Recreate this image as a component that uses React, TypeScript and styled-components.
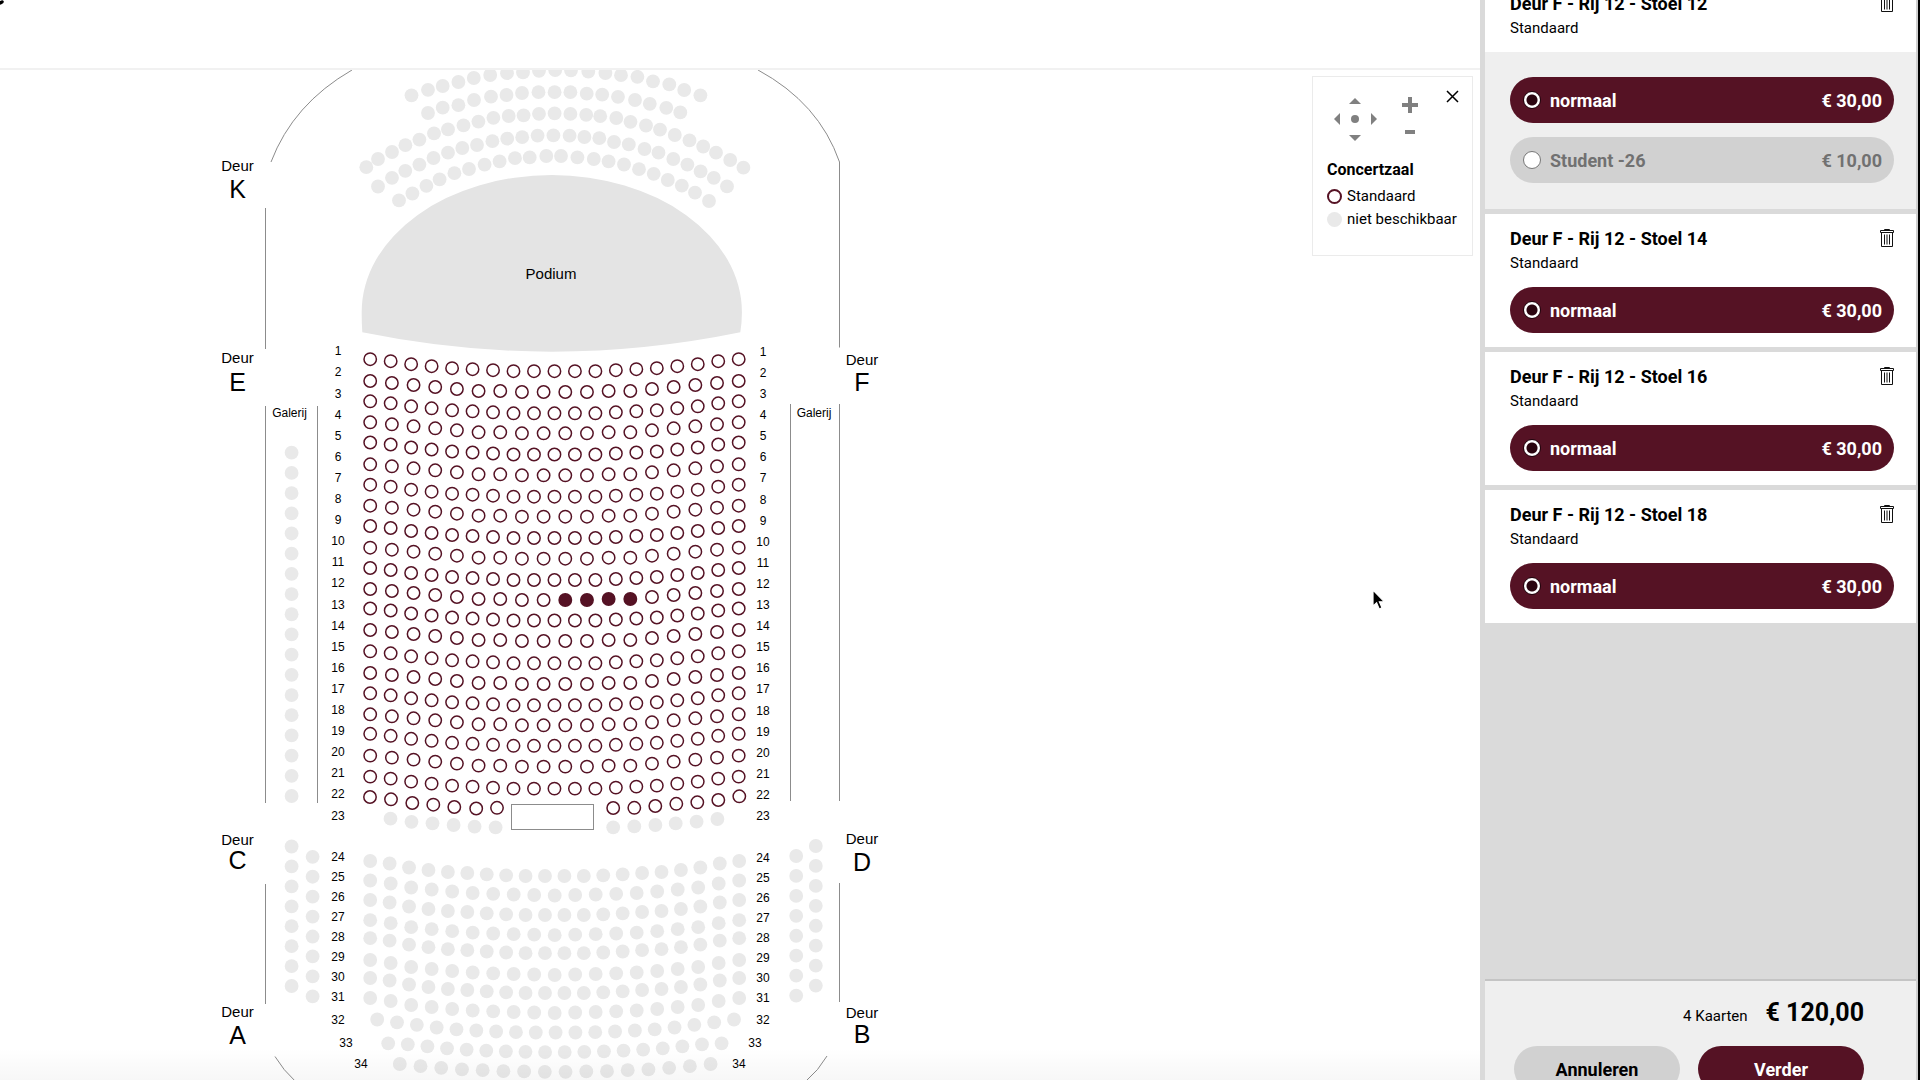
import React, { useState } from "react";
import styled, { createGlobalStyle } from "styled-components";

const WINE = "#551224";
const sans = `Roboto, "Liberation Sans", sans-serif`;

const GlobalStyle = createGlobalStyle`
  *, *::before, *::after { box-sizing: border-box; }
  body { margin: 0; background: #fff; color: #000; font-family: ${sans}; overflow: hidden; }
  button { font: inherit; color: inherit; border: 0; padding: 0; background: none; cursor: pointer; }
`;

/* ---------- page frame ---------- */

const Page = styled.div`
  display: flex;
  height: 100vh;
  overflow: hidden;
  border-right: 2px solid #000;
`;

const Main = styled.main`
  position: relative;
  flex: 1;
  min-width: 0;
  display: flex;
  flex-direction: column;
`;

const TopBar = styled.header`
  flex: none;
  height: 70px;
  border-bottom: 2px solid #f1f1f1;

  svg { display: block; }
`;

const MapArea = styled.section`
  position: relative;
  flex: 1;
  min-height: 0;
  overflow: hidden;

  &::after {
    content: "";
    position: absolute;
    inset: auto 0 0 0;
    height: 32px;
    background: linear-gradient(rgba(0, 0, 0, 0), rgba(0, 0, 0, 0.03));
    pointer-events: none;
  }
`;

const MapSvg = styled.svg`
  display: block;
  width: 100%;
  height: 100%;
  font-family: "Liberation Sans", Arial, sans-serif;
  text-anchor: middle;
`;

const Pointer = styled.svg`
  position: absolute;
  left: 1371px;
  top: 588px;
  z-index: 3;
  pointer-events: none;
`;

/* ---------- hall plan ---------- */

type Point = [number, number];

const GREY = "#e9e9e9";

/* Vertical sag of a row, from its outer seat to the middle. */
const sag19 = [0, 2, 5, 7, 9, 10, 11, 12, 12, 12];
const sag18 = [0, 2, 4, 6, 8, 10, 10, 11, 11];
const sagRear19 = [0, 3, 7, 9, 11, 12.5, 13.3, 14, 14.5, 15];
const sagRear20 = [0, 2.5, 6.5, 9, 11, 12, 13.3, 14.3, 15, 15];

const curvedRow = (x0: number, x1: number, y: number, count: number, sag: number[]): Point[] =>
  Array.from({ length: count }, (_, i) => [
    x0 + ((x1 - x0) * i) / (count - 1),
    y + sag[Math.min(i, count - 1 - i)],
  ]);

const frontTops = [
  359.2, 381, 401.3, 422.3, 442.5, 464.3, 484.7, 505.7, 526, 547.7, 568, 589,
  608.5, 630, 651.3, 673, 693.3, 714.3, 733.8, 755.6, 776.6,
];

const frontRows: Point[][] = frontTops.map((y, i) =>
  i % 2 === 0 ? curvedRow(370.2, 738.7, y, 19, sag19) : curvedRow(370.2, 738.7, y, 18, sag18)
);

const row22: Point[] = [
  [370, 797], [391, 799.3], [412.3, 803], [433.3, 804.7], [454.3, 807], [476.2, 808.5], [497, 807.8],
  [613.2, 808], [634.3, 807.8], [655.3, 806], [676.3, 803.8], [697.3, 802.3], [718.3, 800], [739.3, 796.3],
];

const row23: Point[] = [
  [390.5, 818.7], [411.5, 821.8], [432.5, 823.3], [453.6, 825], [474.6, 826.6], [495.6, 827.3],
  [613.2, 827.3], [634.3, 826.4], [655.4, 825], [675.7, 823.4], [696.6, 821.7], [717.4, 819],
];

const rearTops = [861, 880.5, 900, 920.2, 938.2, 960, 978, 998];

const rearRows: Point[][] = [
  ...rearTops.map((y, i) =>
    i % 2 === 0 ? curvedRow(370.2, 739.2, y, 20, sagRear20) : curvedRow(370.2, 739.2, y, 19, sagRear19)
  ),
  curvedRow(377.2, 734, 1019.5, 19, [0, 2.8, 5.3, 8, 9.8, 11, 12, 12.7, 13, 13]),
  curvedRow(388.2, 721.6, 1043.3, 18, [0, 1, 3, 5, 6.3, 7.3, 8, 8.5, 8.8]),
  curvedRow(399.8, 710.6, 1064, 16, [0, 2.2, 3.8, 5.4, 6.2, 7.2, 7.4, 7.8]),
];

/* Choir rows behind the stage. */
const choirLeft: Point[][] = [
  [[411.5, 95.3], [428, 89.8], [442.7, 86], [458.4, 82], [473.8, 78], [490.2, 75], [507, 73.2], [523, 72.4], [539, 70.8], [555.2, 70.2]],
  [[428, 113], [442.7, 107.7], [458.4, 105.2], [474, 100], [491, 96.7], [506.5, 95], [522, 93], [538.5, 92.2], [554.6, 92.2]],
  [[366.3, 167.2], [378, 159], [392, 152], [405.4, 145.2], [419.4, 139.6], [434, 133.4], [448, 129.4], [463.5, 125.4], [478.4, 121.6], [493.4, 117.8], [508.7, 116], [523.6, 115.3], [539, 113.8], [554.6, 113.4]],
  [[378, 186.5], [392, 177.8], [405.3, 170.8], [419.4, 164.6], [433.5, 158], [448, 152.7], [462.3, 148], [477, 145], [492.4, 141.2], [507.2, 138.7], [522.2, 137.2], [537.6, 135.6], [553.4, 135.4]],
  [[399, 200.4], [412.4, 193.5], [426.4, 185.8], [439.6, 179.3], [454.4, 173.2], [469, 169], [484.6, 164.6], [499.6, 161.4], [515, 158.2], [529.7, 157.4], [546.3, 156]],
];

const choirRight: Point[][] = [
  [[571, 70.3], [588.3, 71.6], [605.4, 73], [621, 75.2], [637.4, 76.8], [653, 81.3], [669.3, 84.4], [684.2, 90], [700.4, 95.3]],
  [[570.4, 92.2], [586.7, 93.7], [602.2, 94.6], [618, 96.8], [635, 100], [649.8, 103.8], [666.3, 107.8], [680.3, 112.4]],
  [[570.4, 113.9], [586.2, 114.8], [600.2, 116.2], [616.3, 118], [630.5, 121.8], [646, 125.5], [660, 129.6], [674.8, 135], [689.5, 140.4], [703.2, 146.5], [716, 152.7], [730.2, 160], [743.4, 167.7]],
  [[569.6, 135.7], [584.4, 137], [599.3, 138.2], [614, 142], [628.8, 144.4], [644.5, 149], [658.5, 152.7], [673.3, 159], [687.4, 164.6], [700.6, 171.4], [713.8, 177.8], [727, 186.4]],
  [[561, 156], [577.4, 157.4], [593.8, 159], [608.6, 161.4], [624, 164.5], [639, 169.2], [653.7, 173.8], [667.8, 180], [681.8, 185.6], [695, 192.6], [709, 201]],
];

const column = (x: number, y0: number, y1: number, count: number): Point[] =>
  Array.from({ length: count }, (_, i) => [x, y0 + ((y1 - y0) * i) / (count - 1)]);

const balconySeats: Point[] = [
  ...column(291.6, 452.7, 796, 18),
  ...column(291.6, 846.5, 986, 8),
  ...column(312.6, 856.8, 996.3, 8),
  ...column(796.2, 856, 995.6, 8),
  ...column(815.8, 846, 985.6, 8),
];

const greySeats: Point[] = [...choirLeft.flat(), ...choirRight.flat(), ...row23, ...rearRows.flat(), ...balconySeats];

const doors = [
  { name: "K", x: 237.5, label: 171, letter: 198 },
  { name: "E", x: 237.5, label: 363, letter: 391 },
  { name: "C", x: 237.5, label: 845, letter: 869 },
  { name: "A", x: 237.5, label: 1017, letter: 1044 },
  { name: "F", x: 862, label: 365, letter: 391 },
  { name: "D", x: 862, label: 844, letter: 871 },
  { name: "B", x: 862, label: 1018, letter: 1043 },
];

const rowLabels = Array.from({ length: 34 }, (_, i) => {
  const n = i + 1;
  if (n <= 23) return { n, left: 338, right: 763, y: 355.3 + i * 21.1 };
  if (n <= 31) return { n, left: 338, right: 763, y: 861.3 + (n - 24) * 20 };
  if (n === 32) return { n, left: 338, right: 763, y: 1023.5 };
  if (n === 33) return { n, left: 346, right: 755, y: 1046.5 };
  return { n, left: 361, right: 739, y: 1067.5 };
});

function HallPlan() {
  return (
    <MapSvg viewBox="0 70 1480 1010" preserveAspectRatio="xMinYMin meet" role="img" aria-label="Concertzaal">
      <g fill="none" stroke="#8c8c8c" strokeWidth="1">
        <path d="M352 70Q293 104 271 162M265.5 208V349M839.5 162V347.5M758 70Q819 103 839.5 162" />
        <path d="M265.5 406V803M317.5 406V803M790.5 404V801M839.5 404V801" />
        <path d="M265.5 884V1004M839.5 883V1002M275 1056.5Q283 1070 296 1082M827 1056Q819 1070 805 1082" />
        <rect x="511.5" y="804.5" width="82" height="25" />
      </g>
      <path
        d="M362.3 332.3Q361.6 322 361.7 312A190.1 137 0 0 1 741.9 312Q742 322 740.3 332.3Q552 371 362.3 332.3Z"
        fill="#e4e4e4"
      />
      <g fill={GREY}>
        {greySeats.map(([x, y], i) => (
          <circle key={i} cx={x} cy={y} r="6.9" />
        ))}
      </g>
      <g stroke={WINE} strokeWidth="1.5">
        {frontRows.map((row, r) =>
          row.map(([x, y], i) => (
            <circle key={`${r}-${i}`} cx={x} cy={y} r="6.2" fill={r === 11 && i >= 9 && i <= 12 ? WINE : "#fff"} />
          ))
        )}
        {row22.map(([x, y], i) => (
          <circle key={i} cx={x} cy={y} r="6.2" fill="#fff" />
        ))}
      </g>
      <g fontSize="12">
        {rowLabels.map(({ n, left, right, y }) => (
          <g key={n}>
            <text x={left} y={y}>{n}</text>
            <text x={right} y={y + 0.5}>{n}</text>
          </g>
        ))}
        <text x="289.5" y="417">Galerij</text>
        <text x="814" y="417">Galerij</text>
      </g>
      <text x="551" y="279" fontSize="15">Podium</text>
      {doors.map((d) => (
        <g key={d.name}>
          <text x={d.x} y={d.label} fontSize="15">Deur</text>
          <text x={d.x} y={d.letter} fontSize="25">{d.name}</text>
        </g>
      ))}
    </MapSvg>
  );
}

/* ---------- legend ---------- */

const Legend = styled.aside`
  position: absolute;
  top: 6px;
  right: 7px;
  z-index: 2;
  width: 161px;
  height: 180px;
  padding: 14px 0 0 14px;
  background: #fff;
  border: 1px solid #ebebeb;
  font-size: 15px;
  line-height: 23px;
`;

const Controls = styled.div`
  display: flex;
  gap: 18px;
  margin-bottom: 11px;
`;

const PanPad = styled.div`
  display: grid;
  grid-template-columns: 19px 18px 19px;
  grid-template-rows: 19px 18px 19px;
  grid-template-areas: ". up ." "left mid right" ". down .";
`;

const PadButton = styled.button<{ $area: string }>`
  grid-area: ${(p) => p.$area};
  display: grid;
  place-items: center;
  color: #808080;
`;

const ZoomPad = styled.div`
  display: grid;
  grid-template-rows: 27px 27px;
  color: #808080;

  button { display: grid; place-items: center; width: 18px; }
`;

const CloseButton = styled.button`
  position: absolute;
  top: 10px;
  right: 10px;
  display: grid;
  place-items: center;
  width: 19px;
  height: 19px;
`;

const LegendTitle = styled.h2`
  margin: 0 0 4px;
  font-size: 16px;
  line-height: 23px;
  font-weight: 700;
`;

const LegendList = styled.ul`
  margin: 0;
  padding: 0;
  list-style: none;
`;

const LegendItem = styled.li<{ $open?: boolean }>`
  display: flex;
  align-items: center;
  gap: 5px;
  white-space: nowrap;

  &::before {
    content: "";
    width: 15px;
    height: 15px;
    border-radius: 50%;
    background: ${(p) => (p.$open ? "#fff" : GREY)};
    border: ${(p) => (p.$open ? `2px solid ${WINE}` : "0")};
  }
`;

const arrows: Record<string, string> = {
  up: "M0 9 6 3 12 9Z",
  down: "M0 3 12 3 6 9Z",
  left: "M9 0V12L3 6Z",
  right: "M3 0V12L9 6Z",
};

const arrowNames: Record<string, string> = { up: "Omhoog", down: "Omlaag", left: "Links", right: "Rechts" };

function MapLegend() {
  return (
    <Legend>
      <CloseButton aria-label="Sluiten">
        <svg width="13" height="13" viewBox="0 0 13 13" stroke="#000" strokeWidth="1.5">
          <path d="M1 1 12 12M12 1 1 12" />
        </svg>
      </CloseButton>
      <Controls>
        <PanPad>
          {Object.keys(arrows).map((dir) => (
            <PadButton key={dir} $area={dir} aria-label={arrowNames[dir]}>
              <svg width="12" height="12" viewBox="0 0 12 12" fill="currentColor">
                <path d={arrows[dir]} />
              </svg>
            </PadButton>
          ))}
          <PadButton $area="mid" aria-label="Centreren">
            <svg width="8" height="8" viewBox="0 0 8 8" fill="currentColor">
              <circle cx="4" cy="4" r="4" />
            </svg>
          </PadButton>
        </PanPad>
        <ZoomPad>
          <button aria-label="Inzoomen">
            <svg width="16" height="16" viewBox="0 0 16 16" stroke="currentColor" strokeWidth="4">
              <path d="M8 0V16M0 8H16" />
            </svg>
          </button>
          <button aria-label="Uitzoomen">
            <svg width="10" height="4" viewBox="0 0 10 4" fill="currentColor">
              <path d="M0 0H10V4H0Z" />
            </svg>
          </button>
        </ZoomPad>
      </Controls>
      <LegendTitle>Concertzaal</LegendTitle>
      <LegendList>
        <LegendItem $open>Standaard</LegendItem>
        <LegendItem>niet beschikbaar</LegendItem>
      </LegendList>
    </Legend>
  );
}

/* ---------- order sidebar ---------- */

const Sidebar = styled.aside`
  flex: none;
  width: 438px;
  display: flex;
  flex-direction: column;
  background: #dadada;
  border-left: 5px solid #dadada;
  border-right: 2px solid #cfcfcf;
`;

const TicketList = styled.div`
  flex: 1;
  min-height: 0;
  display: flex;
  flex-direction: column;
  gap: 5px;
  margin-top: -21px;
`;

const Ticket = styled.article`
  flex: none;
  background: #fff;
`;

const TicketHead = styled.div`
  display: flex;
  justify-content: space-between;
  align-items: flex-start;
  height: 73px;
  padding: 13px 22px 0 25px;
`;

const TicketTitle = styled.h3`
  margin: 0;
  font-size: 18px;
  line-height: 24px;
  font-weight: 700;
`;

const TicketZone = styled.p`
  margin: 0;
  font-size: 15px;
  line-height: 24px;
`;

const TrashButton = styled.button`
  display: block;
  padding-top: 2px;
  line-height: 0;
`;

const Choices = styled.fieldset<{ $open: boolean }>`
  display: grid;
  gap: 14px;
  margin: 0;
  border: 0;
  padding: ${(p) => (p.$open ? "25px 22px 26px 25px" : "0 22px 14px 25px")};
  background: ${(p) => (p.$open ? "#efefef" : "#fff")};
`;

const Choice = styled.label<{ $on: boolean }>`
  display: flex;
  align-items: center;
  gap: 9px;
  height: 46px;
  padding: 0 12px 0 13px;
  border-radius: 23px;
  background: ${(p) => (p.$on ? WINE : "#d1d1d1")};
  color: ${(p) => (p.$on ? "#fff" : "#717171")};
  font-size: 18px;
  font-weight: 700;
  cursor: pointer;
`;

const Radio = styled.input`
  appearance: none;
  flex: none;
  width: 18px;
  height: 18px;
  margin: 0;
  border: 1px solid #777;
  border-radius: 50%;
  background: #fff;

  &:checked {
    border-color: #1f040c;
    background: radial-gradient(circle, #2b0510 5px, #fff 6px);
  }
`;

const Price = styled.span`
  margin-left: auto;
`;

const Footer = styled.footer`
  flex: none;
  margin-bottom: -37px;
  padding: 18px 52px 25px 29px;
  background: #efefef;
  border-top: 2px solid #c4c4c4;
`;

const Total = styled.div`
  display: flex;
  justify-content: flex-end;
  align-items: baseline;
  gap: 18px;
  height: 28px;
  margin-bottom: 19px;
  font-size: 15px;
  line-height: 28px;

  strong { font-size: 25px; }
`;

const Actions = styled.div`
  display: grid;
  grid-template-columns: 1fr 1fr;
  gap: 18px;
`;

const ActionButton = styled.button<{ $primary?: boolean }>`
  height: 46px;
  border-radius: 23px;
  background: ${(p) => (p.$primary ? WINE : "#d1d1d1")};
  color: ${(p) => (p.$primary ? "#fff" : "#000")};
  font-size: 18px;
  font-weight: 700;
`;

function TrashIcon() {
  return (
    <svg width="14" height="18" viewBox="0 0 14 18" fill="none" stroke="#111" strokeWidth="1">
      <path d="M4.5 1.5V.5h5v1M.5 1.5h13v2H.5zM1.5 4v13.5h11V4M4.5 5.5v10M7 5.5v10M9.5 5.5v10" />
    </svg>
  );
}

interface TicketProps {
  seat: number;
  prices: [string, string][];
}

function TicketCard({ seat, prices }: TicketProps) {
  const [picked, setPicked] = useState(0);
  return (
    <Ticket>
      <TicketHead>
        <div>
          <TicketTitle>Deur F - Rij 12 - Stoel {seat}</TicketTitle>
          <TicketZone>Standaard</TicketZone>
        </div>
        <TrashButton aria-label="Verwijderen">
          <TrashIcon />
        </TrashButton>
      </TicketHead>
      <Choices $open={prices.length > 1}>
        {prices.map(([name, price], i) => (
          <Choice key={name} $on={picked === i}>
            <Radio type="radio" name={`stoel-${seat}`} checked={picked === i} onChange={() => setPicked(i)} />
            {name}
            <Price>{price}</Price>
          </Choice>
        ))}
      </Choices>
    </Ticket>
  );
}

const normal: [string, string] = ["normaal", "€ 30,00"];

const tickets: TicketProps[] = [
  { seat: 12, prices: [normal, ["Student -26", "€ 10,00"]] },
  { seat: 14, prices: [normal] },
  { seat: 16, prices: [normal] },
  { seat: 18, prices: [normal] },
];

export default function App() {
  return (
    <Page>
      <GlobalStyle />
      <Main>
        <TopBar>
          <svg width="8" height="8" viewBox="0 0 8 8">
            <ellipse cx="1" cy="2.5" rx="3" ry="1.8" transform="rotate(-30 1 2.5)" fill="#000" />
          </svg>
        </TopBar>
        <MapArea>
          <HallPlan />
          <MapLegend />
        </MapArea>
        <Pointer width="16" height="24" viewBox="0 0 16 24">
          <path d="M2 2V18.2L5.6 14.8 8.2 21 11 19.8 8.4 13.8H13.4Z" fill="#000" stroke="#fff" strokeWidth="1.2" />
        </Pointer>
      </Main>
      <Sidebar>
        <TicketList>
          {tickets.map((t) => (
            <TicketCard key={t.seat} {...t} />
          ))}
        </TicketList>
        <Footer>
          <Total>
            <span>4 Kaarten</span>
            <strong>€ 120,00</strong>
          </Total>
          <Actions>
            <ActionButton>Annuleren</ActionButton>
            <ActionButton $primary>Verder</ActionButton>
          </Actions>
        </Footer>
      </Sidebar>
    </Page>
  );
}
